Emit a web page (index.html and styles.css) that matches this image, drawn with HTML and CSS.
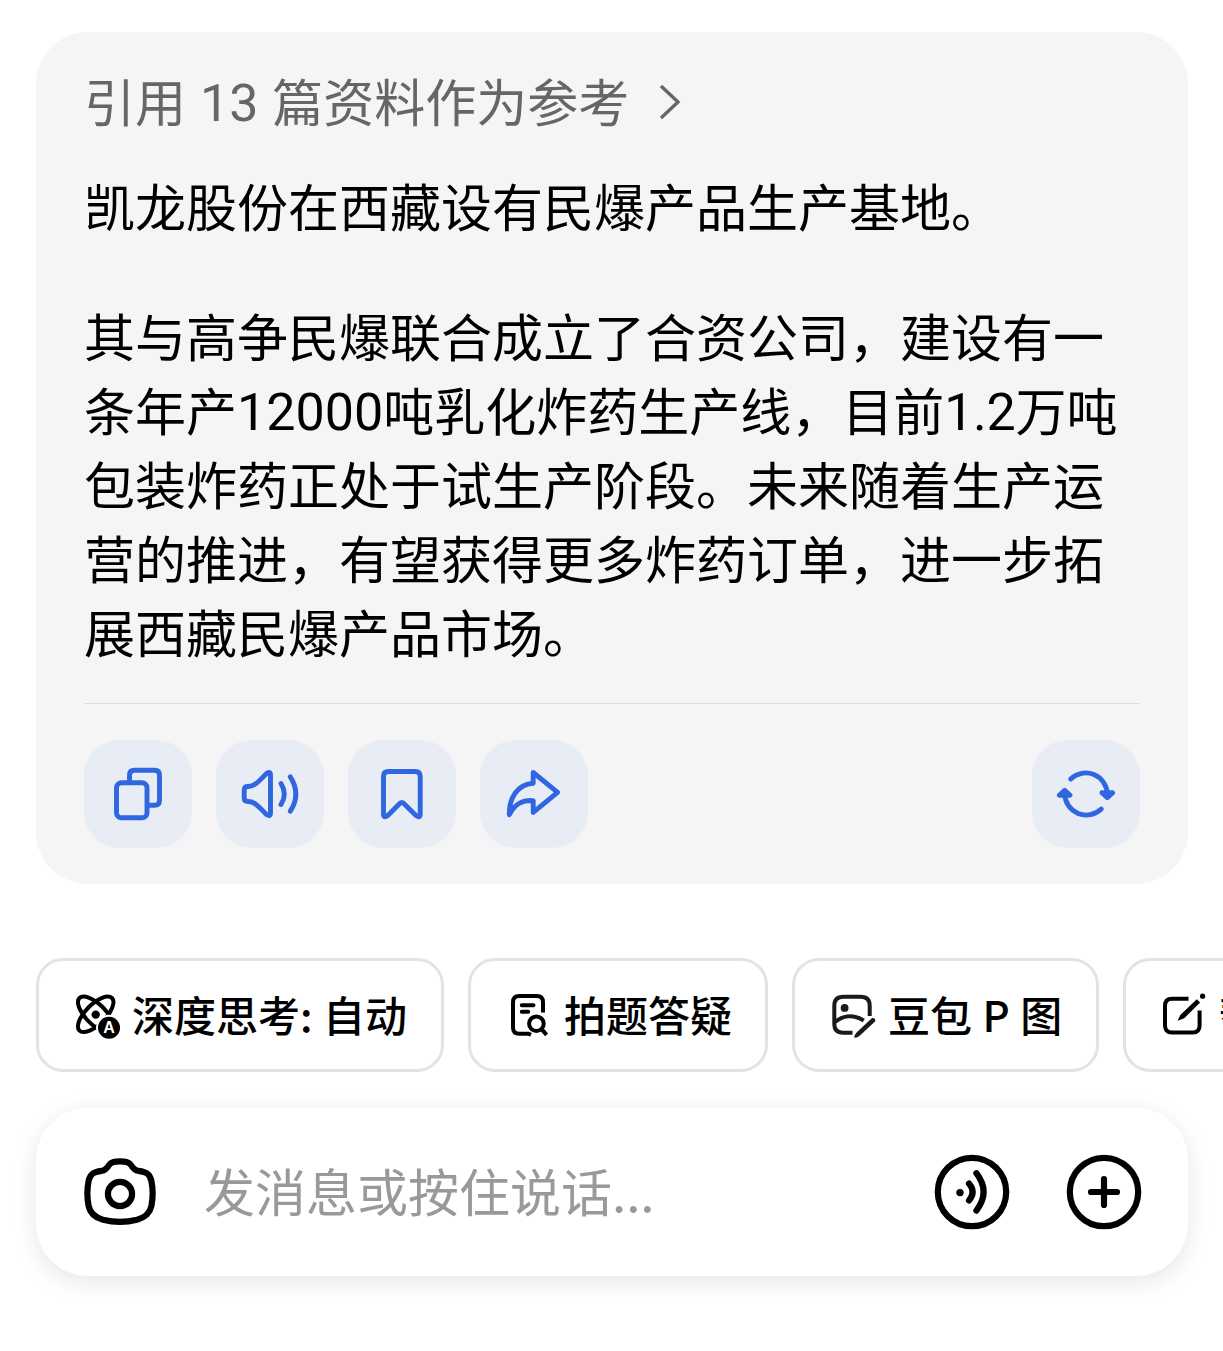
FILE: index.html
```html
<!DOCTYPE html>
<html lang="zh-CN">
<head>
  <meta charset="UTF-8">
  <meta name="viewport" content="width=device-width, initial-scale=1.0">
  <title>豆包</title>
  <link rel="stylesheet" href="styles.css">
</head>
<body>
  <main class="message">
    <div class="reference">
      <span>引用 <span class="num">13</span> 篇资料作为参考</span>
      <svg class="chevron" viewBox="0 0 24 40"><path d="M3 4L20 20L3 36"/></svg>
    </div>
    <p>凯龙股份在西藏设有民爆产品生产基地。</p>
    <p>其与高争民爆联合成立了合资公司，建设有一条年产<span class="num">12000</span>吨乳化炸药生产线，目前<span class="num decimal">1.2</span>万吨包装炸药正处于试生产阶段。未来随着生产运营的推进，有望获得更多炸药订单，进一步拓展西藏民爆产品市场。</p>
    <div class="actions">
      <button class="action" aria-label="复制">
        <svg viewBox="0 0 108 108">
          <rect x="32.5" y="42.7" width="30.5" height="35" rx="5"/>
          <path d="M45.5 42V35.2Q45.5 30.2 50.5 30.2H70.5Q75.5 30.2 75.5 35.2V60.2Q75.5 65.2 70.5 65.2H64"/>
        </svg>
      </button>
      <button class="action" aria-label="朗读">
        <svg viewBox="0 0 108 108">
          <path d="M28.2 50Q28.2 46.5 32 46.5C39 46.5 43 41 50.5 33.5Q54.5 31 54.5 35V73Q54.5 77 50.5 74.5C43 67 39 61.5 32 61.5Q28.2 61.5 28.2 58Z"/>
          <path d="M65 43.5Q71.6 54 65 64.5M74.3 36.8Q85.4 54 74.3 71.2"/>
        </svg>
      </button>
      <button class="action" aria-label="收藏">
        <svg viewBox="0 0 108 108">
          <path d="M40.5 31.5H67.2Q72.2 31.5 72.2 36.5V74Q72.2 78.5 68 75.5L55.8 63.4Q53.8 61.6 51.8 63.4L39.8 75.5Q35.5 78.5 35.5 74V36.5Q35.5 31.5 40.5 31.5Z"/>
        </svg>
      </button>
      <button class="action" aria-label="分享">
        <svg viewBox="0 0 108 108">
          <path d="M53.2 32.5L77.6 52.3L53.2 72.4V60.6C43 60 35 63 29.3 74.8C29 57 38 44.5 53.2 43.3Z"/>
        </svg>
      </button>
      <button class="action action-retry" aria-label="重新生成">
        <svg viewBox="0 0 108 108">
          <path d="M38.7 39A21.6 21.6 0 0 1 75.3 54M32.7 54A21.6 21.6 0 0 0 69.3 69"/>
          <path class="arrow" d="M69.9 52.8L75.3 57.8L80.7 52.8ZM27.3 55.2L32.7 50.2L38.1 55.2Z"/>
        </svg>
      </button>
    </div>
  </main>

  <nav class="chips">
    <button class="chip chip-think">
      <svg viewBox="0 0 48 48">
        <g class="line">
          <ellipse cx="23.7" cy="23.3" rx="23" ry="10" transform="rotate(45 23.7 23.3)"/>
          <ellipse cx="23.7" cy="23.3" rx="23" ry="10" transform="rotate(-45 23.7 23.3)"/>
        </g>
        <circle cx="23.7" cy="23.6" r="4.2"/>
        <circle class="knock" cx="37" cy="36.7" r="13"/>
        <circle cx="37" cy="36.7" r="11"/>
        <text class="badge" x="37" y="42.4">A</text>
      </svg>
      <span>深度思考: 自动</span>
    </button>
    <button class="chip">
      <svg viewBox="0 0 48 48">
        <path class="line" d="M39 21.5V11.2Q39 4.9 32.7 4.9H15.3Q9 4.9 9 11.2V36.4Q9 42.7 15.3 42.7H24.5L27 43.8"/>
        <path class="line round" d="M17.8 14.3H29.5M17.8 20.8H24.2"/>
        <circle class="line" cx="32.4" cy="32.7" r="7.3"/>
        <path class="line" d="M37.6 38.2L42.6 43.8"/>
      </svg>
      <span>拍题答疑</span>
    </button>
    <button class="chip chip-photo">
      <svg viewBox="0 0 48 48">
        <path class="line" d="M41.7 25V14.7Q41.7 5.7 32.7 5.7H15.3Q6.3 5.7 6.3 14.7V32.7Q6.3 41.7 15.3 41.7H24.5M6.3 31.5C15 24.5 24 22.5 35.8 29.5"/>
        <circle cx="16.6" cy="16.9" r="3.9"/>
        <path d="M43.8 27.2Q47.6 26.6 47.3 30.2L32 44.6Q29.5 47 26.2 46.8Q26.3 43.6 28.8 41.2Z"/>
      </svg>
      <span>豆包 P 图</span>
    </button>
    <button class="chip">
      <svg viewBox="0 0 48 48">
        <path class="line" d="M29.5 7.8H13Q6 7.8 6 14.8V34.6Q6 41.6 13 41.6H33.6Q40.6 41.6 40.6 34.6V19.5"/>
        <path d="M37.8 8.2L41.1 11.5L25.2 27.3L18.6 29.8L21.3 23.9Z"/>
        <circle cx="43.6" cy="5.2" r="2.6"/>
      </svg>
      <span>帮我写作</span>
    </button>
  </nav>

  <footer class="composer">
    <svg class="camera" viewBox="0 0 72 72">
      <path d="M36 5.4C41 5.4 45 5.6 47 9C49 12.5 50.5 14.4 54.5 14.9C63 16 66 18.5 67.4 25C69 33 69 42 67.4 50C65.7 58 60 61.8 53 63.7C42 66.4 30 66.4 19 63.7C12 61.8 6.3 58 4.6 50C3 42 3 33 4.6 25C6 18.5 9 16 17.5 14.9C21.5 14.4 23 12.5 25 9C27 5.6 31 5.4 36 5.4Z"/>
      <circle cx="36" cy="38" r="12.1"/>
    </svg>
    <span class="placeholder">发消息或按住说话...</span>
    <svg class="round-icon" viewBox="0 0 80 80">
      <circle cx="40" cy="40" r="34.2"/>
      <circle class="dot" cx="28" cy="40.6" r="3.7"/>
      <path d="M37 31.5Q44.2 40 37 48.4M44.4 21.2Q58.8 40 44.4 58.6"/>
    </svg>
    <svg class="round-icon" viewBox="0 0 80 80">
      <circle cx="40" cy="40" r="34.2"/>
      <path d="M40 27V53M27 40H53"/>
    </svg>
  </footer>
</body>
</html>
```

FILE: styles.css
```css
* {
  box-sizing: border-box;
}
body {
  margin: 0;
  padding: 32px 35px 0 36px;
  height: 1351px;
  overflow: hidden;
  background: #fff;
  color: #000;
  font-family: "Noto Sans CJK SC", sans-serif;
}
svg {
  display: block;
  flex-shrink: 0;
}
button {
  margin: 0;
  border: none;
  font-family: inherit;
  color: inherit;
  cursor: pointer;
}

/* answer bubble */
.message {
  height: 852px;
  padding: 31px 48px 36px;
  border-radius: 52px;
  background: #f5f5f5;
  font-size: 51px;
  line-height: 74px;
}
.reference {
  display: flex;
  align-items: center;
  margin-bottom: 31px;
  color: #666;
  word-spacing: 2.5px;
}
.num {
  font-family: Roboto, sans-serif;
  font-size: 52px;
  line-height: 1;
  vertical-align: 1px;
}
.decimal {
  letter-spacing: -0.3px;
}
.chevron {
  width: 24px;
  height: 40px;
  margin: 4px 0 0 29px;
  fill: none;
  stroke: #666;
  stroke-width: 3.4;
}
.message p {
  margin: 0 -12px 56px 0;
}
.message p + p {
  margin-bottom: 35px;
}
.actions {
  display: flex;
  gap: 24px;
  padding-top: 36px;
  border-top: 1px solid #dcdcdc;
}
.action {
  width: 108px;
  height: 108px;
  padding: 0;
  border-radius: 36px;
  background: #e7ecf5;
}
.action svg {
  width: 108px;
  height: 108px;
  fill: none;
  stroke: #3066e0;
  stroke-width: 4.9;
  stroke-linecap: round;
  stroke-linejoin: round;
}
.action .arrow {
  fill: #3066e0;
}
.action-retry {
  margin-left: auto;
}

/* shortcut chips, scroll off the right edge */
.chips {
  display: flex;
  gap: 24px;
  margin-top: 74px;
}
.chip {
  display: flex;
  align-items: center;
  flex-shrink: 0;
  gap: 12px;
  height: 114px;
  padding: 0 33px;
  border: 3px solid #e3e3e3;
  border-radius: 27px;
  background: #fff;
  font-size: 42px;
  font-weight: 500;
  line-height: 60px;
  white-space: nowrap;
  word-spacing: 1px;
}
.chip span {
  margin-top: -2px;
}
.chip-think {
  width: 408px;
}
.chip-photo {
  width: 307px;
}
.chip svg {
  width: 48px;
  height: 48px;
}
.chip .line {
  fill: none;
  stroke: #000;
  stroke-width: 4;
}
.chip .round {
  stroke-linecap: round;
}
.chip .knock {
  fill: #fff;
}
.chip .badge {
  fill: #fff;
  font: bold 16px "Liberation Sans", sans-serif;
  text-anchor: middle;
}
.chip-photo svg {
  fill: #1a1a1a;
}
.chip-photo .line {
  stroke: #1a1a1a;
}

/* input bar */
.composer {
  display: flex;
  align-items: center;
  height: 168px;
  margin-top: 36px;
  padding: 0 44px 0 48px;
  border-radius: 52px;
  background: #fff;
  box-shadow: 0 6px 24px rgba(0, 0, 0, 0.1);
}
.composer svg {
  fill: none;
  stroke: #000;
  stroke-width: 6.2;
  stroke-linecap: round;
}
.camera {
  width: 72px;
  height: 72px;
}
.placeholder {
  flex: 1;
  margin: -4px 0 0 48px;
  color: #999;
  font-size: 51px;
  line-height: 74px;
}
.round-icon {
  width: 80px;
  height: 80px;
}
.round-icon + .round-icon {
  margin-left: 52px;
}
.composer .dot {
  fill: #000;
  stroke: none;
}
```
